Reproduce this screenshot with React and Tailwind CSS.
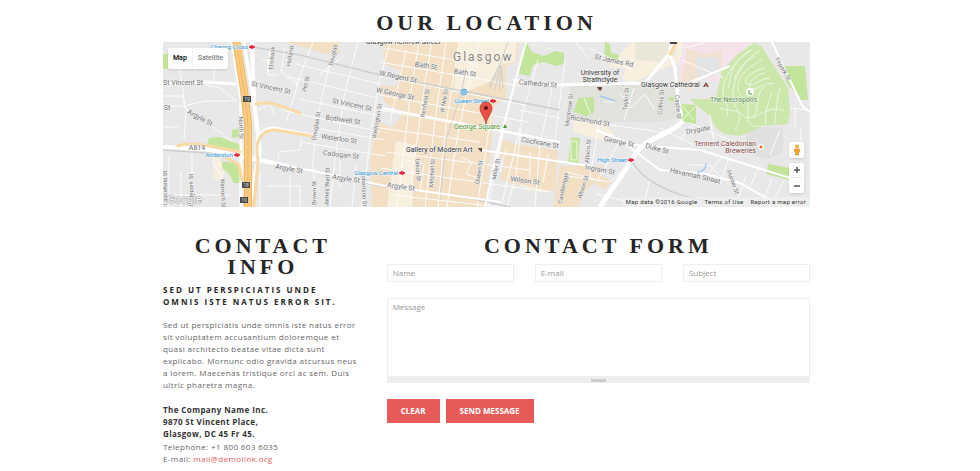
import React from "react";

const labels = [
    ["Elmbank", 272, 58, -85], ["Holland", 290, 56, -80], ["Douglas", 333, 55, -78], ["Pitt St", 306, 84, -78],
    ["St Vincent St", 183, 83, 0], ["St Vincent St", 271, 88, 12], ["St Vincent St", 352, 105, 12],
    ["Bothwell St", 343, 120, 8], ["Argyle St", 200, 118, 28], ["St", 167, 108, 0],
    ["Bath St", 426, 66, 8], ["Bath St", 465, 73, 8], ["W Regent St", 398, 77, 12], ["W George St", 395, 94, 12],
    ["Renfield St", 425, 103, -80], ["W Nile St", 444, 101, -80], ["Cathedral St", 538, 84, 5],
    ["Montrose St", 569, 110, -82], ["Richmond St", 590, 121, 10], ["St James Rd", 614, 61, 12],
    ["Taylor St", 626, 99, -85], ["Collins St", 661, 102, -85], ["Castle St", 678, 107, 85],
    ["Firpark St", 783, 69, 60], ["North St", 241, 128, 88], ["A814", 197, 148, 0],
    ["Waterloo St", 339, 139, 8], ["Cadogan St", 341, 155, 6], ["Argyle St", 289, 169, 10], ["Argyle St", 346, 179, 8],
    ["Douglas St", 316, 126, -80], ["Wellington St", 377, 121, -80],
    ["Hydepark St", 191, 190, -90], ["Lancefield St", 165, 188, -90], ["Warroch St", 223, 193, 88],
    ["Brown St", 314, 193, -90], ["James Watt St", 327, 187, -88], ["Robertson St", 364, 189, 88],
    ["Union St", 418, 170, 86], ["Mitchell St", 432, 173, -87], ["Queen St", 479, 172, -80], ["Miller St", 496, 169, -78],
    ["Cochrane St", 540, 143, 10], ["Albion St", 588, 151, -85], ["Albion St", 583, 187, -72],
    ["Ingram St", 600, 170, 10], ["Argyle St", 401, 187, 8], ["Wilson St", 525, 181, 8], ["Candleriggs", 563, 188, -78],
    ["George St", 619, 142, 12], ["Duke St", 657, 149, 15], ["Havannah Street", 695, 176, 13],
    ["Hunter St", 733, 182, 70], ["Drygate", 698, 130, -10],
]

const stations = [
    ["Charing Cross", 248, 47], ["Queen Street", 489, 101], ["Anderston", 233, 155],
    ["Glasgow Central", 398, 173], ["High Street", 627, 160],
]

const badges = [["19", 247, 99], ["18", 246, 185], ["19", 244, 200]]

const CityMap = () => (
    <svg
        viewBox="163 42 647 165"
        preserveAspectRatio="xMidYMid slice"
        className="block h-full w-full bg-[#e8e8e8] font-[Roboto,sans-serif] text-[7px]"
        role="img"
        aria-label="Map of Glasgow"
    >
        {/* built-up areas */}
        <g fill="#f3dfc4">
            <path d="M285 42H339V54L322 53L300 46Z" />
            <path d="M383 42H519L516 62L506 66V98L494 106L490 148L484 207H372L370 160L378 121L392 128L404 112L386 104L378 86L396 86L400 70L384 64Z" />
            <path d="M500 138L516 144L558 150L555 190L540 192L525 187L500 180L504 166L500 156Z" />
            <path d="M484 130L492 134L486 207H470Z" />
            <path d="M560 166H603L596 182L588 188L577 207H553Z" />
            <path d="M600 174L612 182L604 190L596 184Z" />
        </g>
        <g fill="#f9efdf">
            <path d="M458 42H517L515 62L503 64L494 80L470 90L454 92Z" />
            <path d="M396 141L416 145L411 207H387Z" />
            <path d="M632 42H684L680 62L655 72L634 82L622 80L626 68H607Z" />
            <path d="M571 118L600 120L614 134L606 142L574 132Z" />
            <path d="M214 152L226 168L222 182L213 178Z" />
        </g>
        <path d="M635 42H676V54L660 62L635 60Z" fill="#ebe7d8" />
        <path d="M686 42H750L728 66L722 84L704 78L680 84L680 60Z" fill="#f5e2ea" />
        <path d="M686 48L704 54L722 50L722 74L706 76L695 78L690 92L680 84L685 66Z" fill="#f1e1d1" />
        <path d="M696 57H719V76H697Z" fill="#e2e3e5" />
        <path d="M570 84L676 86L680 116L660 122L604 122L572 116Z" fill="#e1e2dc" />
        <path d="M746 126L783 128V152L765 160L746 150Z" fill="#e0e0e0" />
        {/* parks */}
        <g fill="#c3e49b">
            <path d="M163 54H168V69H163Z" />
            <path d="M526 42L532 52L544 56L555 51L564 53V64L555 66L544 62L533 65L530 76L519 74L524 42Z" />
            <path d="M578 98L594 97V112L586 116L574 112Z M605 42L610 44L611 53L619 55L618 60L604 56Z" />
            <path d="M571 137L580 138L578 165L568 163Z" />
            <path d="M784 66H805L808 100L801 100L786 82Z" />
            <path d="M209 138L220 137L240 145V150L207 146Z M232 130L239 128V137L232 138Z M222 161L240 164V183L234 183L229 174L222 168Z" />
            <path d="M681 104L696 105V124L681 121Z M669 97H674V101H669Z" />
            <path d="M768 164L790 168L788 180L766 174Z" />
        </g>
        <path d="M754 43L762 47L788 88L790 112L788 124L764 126L740 136L724 134L716 128L710 116L697 106L690 99L716 99L722 70L738 54Z" fill="#cbe7ac" />
        <g fill="none" stroke="#eef7e3" strokeWidth="1">
            <path d="M753 49C740 54 724 76 723 88S730 104 727 116 M760 51C750 54 733 75 733 94S746 110 735 130 M762 60C750 66 736 76 738 90C740 100 750 95 748 112S756 126 766 126 M765 68C754 70 740 80 747 84S762 76 770 79 M766 86C754 92 760 110 753 118 M772 92C768 106 764 112 766 124 M780 88C776 100 777 112 774 125 M720 108C730 112 736 108 744 116S770 102 784 111" />
            <path d="M750 51C730 64 733 70 728 88 M755 56C744 62 738 68 734 80 M764 73C752 76 745 88 752 89S764 81 774 84 M682 106L694 120 M696 106L682 120 M571 141H577V160H571Z M533 45L556 50 M584 98L590 113" />
        </g>
        {/* minor streets */}
        <g fill="none" stroke="#fcfcfc" strokeWidth="1">
            <path d="M163 96H182L186 110L184 140 M175 50L182 82L185 108L210 125L232 141 M205 85L220 88L237 101 M163 106H184L205 101H236 M163 127H178 M192 150V207 M215 152L213 164L222 175V207 M169 155V207 M181 172V207 M200 65H214V82 M163 195H230" />
            <path d="M253 47V75 M270 48L268 72 M285 48L281 72L298 84L286 122 M262 60H268V75H278 M313 42L296 86 M330 62L318 115L312 170 M358 42L344 96L335 160L330 207 M345 55L319 75 M296 64L380 84 M286 76L378 98 M300 99L380 116 M282 110L380 132 M314 128L385 140 M300 142L385 156 M278 160L279 152L300 150L302 138 M258 110L270 104L275 115 M260 172V207 M268 186H300V207 M290 175V207 M314 168V207 M340 160V188 M356 165L352 207" />
            <path d="M390 42L379 82L370 140L362 207 M406 50L390 122 M419 42L410 98L397 207 M432 42L425 82L413 170L411 207 M446 42L435 120L425 207 M458 48L446 125L438 207 M479 42L466 95L455 150L447 207" />
            <path d="M384 48L478 64 M380 62L520 86 M380 76L525 105 M380 95L528 122 M380 110L548 140 M380 128L480 142 M386 152L530 170 M380 168L548 192 M392 195L500 207" />
            <path d="M492 110L477 207 M508 110L488 207 M520 128L501 207 M538 60L522 116L516 176L507 207 M552 88L540 145L535 207 M565 60L555 140 M530 152V178 M548 155L543 183 M506 149L500 172 M519 110L560 118 M520 185L550 192 M461 157L472 162L466 174L478 178 M405 160L424 164L420 190 M576 42L588 58 M590 48L632 70 M600 118L590 178 M604 102L615 102 M619 92L631 108L645 94L655 110 M634 88L624 120" />
            <path d="M574 120L662 132 M567 176L610 182L620 173 M596 194L640 205 M632 166L650 180L643 207 M620 140L598 180L567 172 M660 128L684 140L695 146 M680 141L690 126L700 134L709 125 M710 115L714 145 M723 155L708 174 M728 160L720 185 M746 176L735 207 M772 178L763 202 M760 165L750 187 M689 165H710L722 178 M790 108L808 110 M801 128V151 M780 130L770 155 M784 180L775 198 M684 48L704 43 M682 60L724 78 M795 109V129 M689 123L730 140" />
        </g>
        {/* railways */}
        <g fill="none" stroke="#cfcfcf" strokeWidth="1.5">
            <path d="M253 47L300 55L380 75L560 110 M163 150L236 155L275 164L320 173L380 186L460 196L510 207 M632 162C650 190 690 200 740 207" />
            <path d="M490 88L500 64L508 42 M495 90L500 65 M499 91L501 65 M489 86L499 66 M503 88L501 66 M466 70L461 94L446 140L440 200" strokeWidth="1" />
        </g>
        {/* main streets */}
        <g fill="none" stroke="#ffffff" strokeLinejoin="round">
            <path d="M163 84L205 82L236 84" strokeWidth="3" />
            <path d="M163 147L205 149L240 156L288 166" strokeWidth="4" />
            <path d="M288 166L380 185L500 202" strokeWidth="2" />
            <path d="M232 42L241 100L241 207 M244 42L254 104L258 128L256 160 M260 160C254 134 262 128 274 128L316 136" strokeWidth="3" />
            <path d="M513 80L546 85L600 84L645 83L669 54 M672 42L669 54L675 67L678 100L682 116" strokeWidth="3" />
            <path d="M526 42L514 86L500 140L485 207" strokeWidth="2" />
            <path d="M683 121C668 137 646 136 634 156S611 190 600 207" strokeWidth="5" />
            <path d="M381 108L560 142 M480 150L590 166L600 172" strokeWidth="2" />
            <path d="M596 130L634 145L700 150L790 178 M772 42L786 72L803 107L810 112 M686 84L730 66 M620 140L660 170L702 173L740 183L770 200" strokeWidth="2" />
        </g>
        {/* motorway and slip roads */}
        <g fill="none" strokeLinecap="round">
            <path d="M252 42L254 103L260 152L249 207" stroke="#ffffff" strokeWidth="4" />
            <path d="M256 104C272 100 285 108 300 113 M258 160C254 140 262 129 276 130L312 136 M178 146C190 141 212 146 240 152 M225 157L239 165L242 180 M258 160L254 207 M678 40L670 54" stroke="#fad9a4" strokeWidth="3" />
            <path d="M236 40L244 90L248 124V210" stroke="#f0b964" strokeWidth="8" />
            <path d="M236 40L244 90L248 124V210" stroke="#fccb82" strokeWidth="6" />
            <path d="M236 40L244 90L248 124V210" stroke="#efb968" strokeWidth="1" />
        </g>
        <path d="M706 163C706 170 702 172 697 172 M600 96L615 101" fill="none" stroke="#a5c8f4" strokeWidth="1.5" />
        <path d="M670 42H677V44H670Z" fill="#444444" />
        {badges.map(([road, x, y], i) => (
            <g key={i}>
                <rect x={x - 4} y={y - 3} width="8" height="6" fill="#4a4a4a" />
                <text x={x} y={y + 2} textAnchor="middle" fill="#dddddd" fontSize="5">{road}</text>
            </g>
        ))}
        {/* street names, steep ones a size smaller */}
        <g fill="#737373" stroke="#f5f5f5" strokeWidth="1" paintOrder="stroke" textAnchor="middle">
            {labels.map(([name, x, y, angle], i) => (
                <text key={i} x={x} y={y + 2} fontSize={Math.abs(angle) > 45 ? 6 : 7} transform={`rotate(${angle} ${x} ${y})`}>
                    {name}
                </text>
            ))}
        </g>
        {stations.map(([name, x, y]) => (
            <g key={name}>
                <text x={x} y={y + 2} fontSize="6" textAnchor="end" fill="#2f9bd6" stroke="#f5f5f5" strokeWidth="1" paintOrder="stroke">{name}</text>
                <path d={`M${x + 1} ${y}l3 -2v1h2l1 1l-3 2v-1h-2z`} fill="#e6273e" stroke="#e6273e" strokeWidth="0.7" />
            </g>
        ))}
        <circle cx="464" cy="92" r="3" fill="#cde7f7" stroke="#58aee0" />
        <path d="M463 94V90H465V94M463 92H465" fill="none" stroke="#3f9cd2" strokeWidth="0.7" />
        {/* places */}
        <g stroke="#f7f7f7" strokeWidth="1" paintOrder="stroke" fill="#333333">
            <text x="403" y="44" textAnchor="middle">Glasgow Renfrew Street</text>
            <text x="600" y="75" textAnchor="middle">University of</text>
            <text x="600" y="82" textAnchor="middle">Strathclyde</text>
            <text x="641" y="87">Glasgow Cathedral</text>
            <text x="406" y="152">Gallery of Modern Art</text>
            <text x="454" y="129" fill="#4f9a30">George Square</text>
            <text x="710" y="102" fill="#4f8a3c">The Necropolis</text>
            <text x="756" y="146" textAnchor="end" fill="#85483e">Tennent Caledonian</text>
            <text x="756" y="153" textAnchor="end" fill="#85483e">Breweries</text>
            <text x="453" y="61" fontSize="12" letterSpacing="2" fill="#8f8776">Glasgow</text>
        </g>
        <path d="M703 87L706 82L709 87H707L706 85L705 87Z" fill="#8b4a43" />
        <path d="M597 87H602V89L600 91L598 89Z M478 148H482V152L480 151Z" fill="#6b4b45" />
        <path d="M505 124L507 128H503Z" fill="#4f9a30" />
        <circle cx="750" cy="92" r="4" fill="#ffffff" />
        <path d="M749 90V94H752" fill="none" stroke="#4f9a30" />
        <circle cx="761" cy="147" r="3" fill="#ffffff" />
        <circle cx="761" cy="147" r="1.5" fill="#ef6c21" />
        {/* marker */}
        <path d="M486 124C485 117 480 114 480 108A6 6 0 0 1 492 108C492 114 487 117 486 124Z" fill="#ea4f43" stroke="#a83a32" strokeWidth="0.7" />
        <circle cx="486" cy="108" r="2" fill="#5a1713" />
    </svg>
)

const Heading = ({ children }) => (
    <h2 className="text-center font-['Liberation_Serif',serif] text-[22px] leading-[21px] font-bold tracking-[4px] text-[#262626] uppercase">
        {children}
    </h2>
)

const LocationMap = () => (
    <div className="relative h-[165px] overflow-hidden font-[Roboto,sans-serif]">
        <CityMap />
        <div className="absolute top-[6px] left-[5px] flex h-[21px] items-center rounded-xs bg-white text-[7px] shadow-sm">
            <button type="button" className="h-full px-[5px] font-medium text-black">Map</button>
            <button type="button" className="h-full border-l border-gray-100 px-[5px] text-[#666]">Satellite</button>
        </div>
        <div className="absolute right-[6px] bottom-[14px] flex w-[15px] flex-col gap-[5px]">
            <button type="button" aria-label="Street view" className="flex h-[16px] items-center justify-center rounded-xs bg-white shadow-sm">
                <svg viewBox="0 0 8 12" className="h-[12px] w-[8px]">
                    <circle cx="4" cy="2.5" r="2" fill="#f2b13d" />
                    <path d="M1.5 5H6.5V8H5.5V11H2.5V8H1.5Z" fill="#f2a52c" stroke="#d08a24" strokeWidth="0.5" />
                </svg>
            </button>
            <div className="flex flex-col rounded-xs bg-white shadow-sm">
                <button type="button" aria-label="Zoom in" className="mx-[2px] flex h-[15px] items-center justify-center border-b border-gray-200">
                    <svg viewBox="0 0 6 6" className="size-[6px]"><path d="M3 0V6M0 3H6" stroke="#555" strokeWidth="1.5" /></svg>
                </button>
                <button type="button" aria-label="Zoom out" className="flex h-[15px] items-center justify-center">
                    <svg viewBox="0 0 6 6" className="size-[6px]"><path d="M0 3H6" stroke="#555" strokeWidth="1.5" /></svg>
                </button>
            </div>
        </div>
        <svg viewBox="0 0 42 14" className="absolute bottom-0 left-[2px] h-[14px] w-[42px]">
            <text x="2" y="10" fontSize="11" fill="#ffffff" stroke="#9c9c9c" strokeWidth="1" paintOrder="stroke">Google</text>
        </svg>
        <div className="absolute right-0 bottom-0 flex gap-[7px] bg-[#f1f1f1]/70 px-[4px] text-[6px] leading-[10px] tracking-wider text-[#333]">
            <span>Map data ©2016 Google</span>
            <a href="#terms">Terms of Use</a>
            <a href="#report">Report a map error</a>
        </div>
    </div>
)

const ContactInfo = () => (
    <section className="text-[8px] leading-[12px] tracking-wider text-[#666]">
        <Heading>Contact Info</Heading>
        <h3 className="mt-[7px] font-bold tracking-[2px] text-[#262626] uppercase">
            Sed ut perspiciatis unde<br />
            omnis iste natus error sit.
        </h3>
        <p className="mt-[11px]">
            Sed ut perspiciatis unde omnis iste natus error sit voluptatem accusantium doloremque et quasi
            architecto beatae vitae dicta sunt explicabo. Mornunc odio gravida atcursus neus a lorem.
            Maecenas tristique orci ac sem. Duis ultric pharetra magna.
        </p>
        <address className="mt-[13px] not-italic">
            <strong className="block font-bold text-[#333]">
                The Company Name Inc.<br />
                9870 St Vincent Place,<br />
                Glasgow, DC 45 Fr 45.
            </strong>
            <span className="mt-px block">Telephone: +1 800 603 6035</span>
            E-mail: <a href="mailto:mail@demolink.org" className="text-[#e75c5a]">mail@demolink.org</a>
        </address>
    </section>
)

const fieldStyles = "w-full min-w-0 border border-[#eee] px-[5px] text-[8px] placeholder:text-[#999] focus:outline-none"
const buttonStyles = "h-[24px] bg-[#e65b58] px-[14px] text-[8px] font-bold text-white uppercase"

const ContactForm = () => (
    <section className="col-span-2">
        <Heading>Contact Form</Heading>
        <form onSubmit={e => e.preventDefault()}>
            <div className="mt-[8px] grid grid-cols-3 gap-[21px]">
                <input type="text" name="name" aria-label="Name" placeholder="Name" className={`h-[18px] pb-[2px] ${fieldStyles}`} />
                <input type="email" name="email" aria-label="E-mail" placeholder="E-mail" className={`h-[18px] pb-[2px] ${fieldStyles}`} />
                <input type="text" name="subject" aria-label="Subject" placeholder="Subject" className={`h-[18px] pb-[2px] ${fieldStyles}`} />
            </div>
            <div className="mt-[16px]">
                <textarea
                    name="message"
                    aria-label="Message"
                    placeholder="Message"
                    className={`block h-[79px] resize-none py-[2px] leading-[12px] ${fieldStyles}`}
                />
                <div className="flex h-[6px] items-center justify-center bg-[#eee]">
                    <span className="h-[3px] w-[15px] bg-[#ccc]" />
                </div>
            </div>
            <div className="mt-[16px] flex gap-[6px]">
                <button type="reset" className={buttonStyles}>Clear</button>
                <button type="submit" className={buttonStyles}>Send message</button>
            </div>
        </form>
    </section>
)

const App = () => {
    return (
        <main className="bg-white pt-[12px] pr-[170px] pl-[163px] font-['Open_Sans',sans-serif]">
            <Heading>Our Location</Heading>
            <div className="mt-[9px]">
                <LocationMap />
            </div>
            <div className="mt-[28px] grid grid-cols-3 gap-6">
                <ContactInfo />
                <ContactForm />
            </div>
        </main>
    )
}

export default App
